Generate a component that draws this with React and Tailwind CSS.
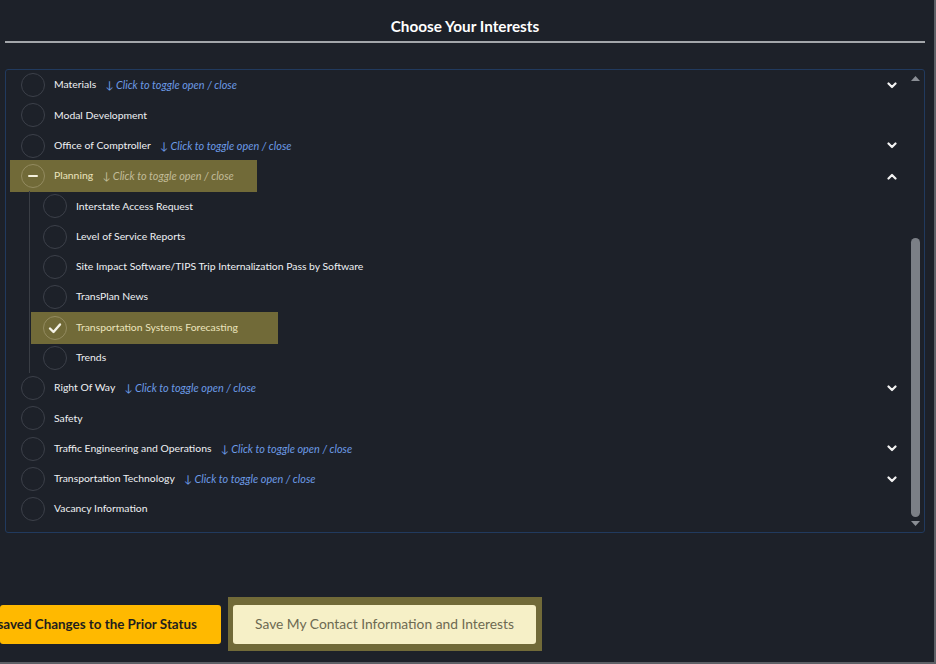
import React from "react";

const FONT = { fontFamily: "Lato, 'Open Sans', 'Noto Sans', sans-serif" };

function Chevron({ up }) {
  return (
    <svg width="10" height="7" viewBox="0 0 10 7" className="shrink-0">
      {up ? (
        <polyline points="1.5,5.5 5,2 8.5,5.5" fill="none" stroke="#f2f2f2" strokeWidth="2.2" strokeLinecap="round" strokeLinejoin="round" />
      ) : (
        <polyline points="1.5,1.5 5,5 8.5,1.5" fill="none" stroke="#f2f2f2" strokeWidth="2.2" strokeLinecap="round" strokeLinejoin="round" />
      )}
    </svg>
  );
}

function Circle({ mark, hl }) {
  return (
    <div
      className={
        "w-[24px] h-[24px] rounded-full border shrink-0 flex items-center justify-center " +
        (hl ? "border-[#938b60]" : "border-[#3c4049]")
      }
    >
      {mark === "minus" && <div className="w-[10px] h-[2px] bg-[#f4f0dc] rounded-sm" />}
      {mark === "check" && (
        <svg width="14" height="12" viewBox="0 0 14 12">
          <polyline points="2,6.5 5.5,10 12,2.5" fill="none" stroke="#f4f2e6" strokeWidth="2.4" strokeLinecap="round" strokeLinejoin="round" />
        </svg>
      )}
    </div>
  );
}

function Toggle({ hl }) {
  return (
    <span className={"ml-[9px] italic text-[10.9px] " + (hl ? "text-[#c2bc98]" : "text-[#6c9be6]")}>
      <span className="not-italic">↓</span> Click to toggle open / close
    </span>
  );
}

function Row({ label, toggle, chevron, hl, mark, child }) {
  return (
    <div className="h-[30.3px] flex items-center">
      <div
        className={
          "flex items-center " +
          (child ? "ml-[1px] pl-[12px] " : "ml-[4px] pl-[11px] ") +
          (hl ? "w-[247px] h-[32px] bg-[#716a38]" : "")
        }
      >
        <Circle mark={mark} hl={hl} />
        <span className={"ml-[9px] whitespace-nowrap " + (hl ? "text-[#ebe4bd]" : "text-[#eef0f3]")}>{label}</span>
        {toggle && <Toggle hl={hl} />}
      </div>
      <div className="flex-1" />
      {chevron && (
        <div className="mr-[11px]">
          <Chevron up={chevron === "up"} />
        </div>
      )}
    </div>
  );
}

export default function App() {
  return (
    <div
      style={FONT}
      className="w-[936px] h-[664px] bg-[#1d2129] border-r-2 border-b-2 border-[#5d6066] overflow-hidden flex flex-col"
    >
      <div className="w-[920px] ml-[5px] pt-[16px] text-center text-[15.3px] font-bold text-white leading-[20px]">
        Choose Your Interests
      </div>
      <div className="ml-[5px] w-[920px] h-[2px] bg-[#a3a6aa] mt-[5px]" />

      <div className="ml-[5px] mt-[26px] w-[920px] h-[464px] border border-[#213a5e] rounded-[3px] flex text-[10.4px]">
        <div className="flex-1 flex flex-col">
          <Row label="Materials" toggle chevron="down" />
          <Row label="Modal Development" />
          <Row label="Office of Comptroller" toggle chevron="down" />
          <Row label="Planning" toggle chevron="up" hl mark="minus" />
          <div className="ml-[23px] border-l border-[#3a3e45] flex flex-col">
            <Row child label="Interstate Access Request" />
            <Row child label="Level of Service Reports" />
            <Row child label="Site Impact Software/TIPS Trip Internalization Pass by Software" />
            <Row child label="TransPlan News" />
            <Row child label="Transportation Systems Forecasting" hl mark="check" />
            <Row child label="Trends" />
          </div>
          <Row label="Right Of Way" toggle chevron="down" />
          <Row label="Safety" />
          <Row label="Traffic Engineering and Operations" toggle chevron="down" />
          <Row label="Transportation Technology" toggle chevron="down" />
          <Row label="Vacancy Information" />
        </div>
        <div className="w-[14px] mr-[2px] flex flex-col items-center pt-[6px] pb-[6px]">
          <svg width="9" height="5" viewBox="0 0 9 5">
            <polygon points="0,5 4.5,0 9,5" fill="#8a8e95" />
          </svg>
          <div className="flex-1" />
          <div className="w-[9px] h-[279px] rounded-full bg-[#7b7f86]" />
          <div className="h-[4px]" />
          <svg width="9" height="5" viewBox="0 0 9 5">
            <polygon points="0,0 4.5,5 9,0" fill="#8a8e95" />
          </svg>
        </div>
      </div>

      <div className="mt-[64px] flex items-center">
        <div className="w-[221px] h-[39px] bg-[#ffb900] rounded-[3px] flex items-center justify-end pr-[24px] overflow-hidden whitespace-nowrap text-[13.4px] font-bold text-[#1e1e1e]">
          Reset Unsaved Changes to the Prior Status
        </div>
        <div className="ml-[7px] w-[314px] h-[54px] bg-[#716a38] pl-[5px] pr-[6px] pt-[8px] pb-[7px]">
          <div className="w-full h-full bg-[#f6f0c7] rounded-[3px] flex items-center justify-center text-[13.8px] text-[#6d6a52]">
            Save My Contact Information and Interests
          </div>
        </div>
      </div>
    </div>
  );
}
